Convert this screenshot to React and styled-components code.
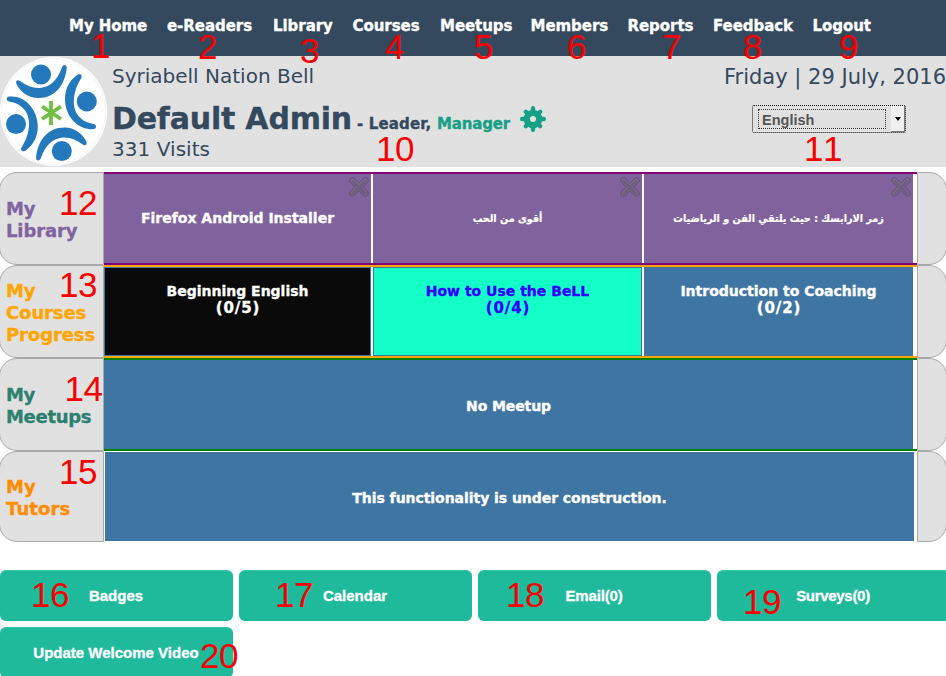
import React from "react";
import styled, { createGlobalStyle, css } from "styled-components";

const Global = createGlobalStyle`
  html, body { margin: 0; padding: 0; background: #fefefe; overflow: hidden; }
  * { box-sizing: border-box; }
`;

const sans = `Verdana, "DejaVu Sans", sans-serif`;
const arial = `"Liberation Sans", Arial, sans-serif`;

const heavy = css`
  font-weight: bold;
  -webkit-text-stroke: 0.35px currentColor;
`;

const Page = styled.div`
  position: relative;
  width: 946px;
  height: 676px;
  overflow: hidden;
  font-family: ${sans};
`;

const Nav = styled.nav`
  height: 56px;
  padding: 16px 0 0 69px;
  display: flex;
  background: #34495e;
`;

const NavLink = styled.a`
  flex: none;
  width: ${(p) => p.$w}px;
  ${heavy}
  font-size: 15px;
  line-height: 20px;
  letter-spacing: -0.05px;
  white-space: nowrap;
  color: #fff;
`;

const Header = styled.header`
  height: 111px;
  display: flex;
  background: #e1e1e1;
  color: #34495e;
`;

const Logo = styled.svg`
  flex: none;
  width: 112px;
  height: 111px;
`;

const Identity = styled.div`
  flex: 1;
  padding-top: 8px;
  white-space: nowrap;
`;

const Plain = styled.div`
  font-size: ${(p) => p.$size || 20}px;
  line-height: 24px;
  letter-spacing: ${(p) => p.$ls || 0}px;
`;

const NameRow = styled.div`
  display: flex;
  align-items: baseline;
  height: 49px;
  padding-top: 12px;
`;

const Name = styled.h1`
  margin: 0;
  width: 245px;
  ${heavy}
  font-size: 30px;
  line-height: 38px;
  letter-spacing: -0.2px;
`;

const Role = styled.span`
  width: ${(p) => p.$w}px;
  ${heavy}
  font-size: 15px;
  letter-spacing: ${(p) => p.$ls}px;
  color: ${(p) => (p.$accent ? "#16a085" : "#34495e")};
`;

const Gear = styled.svg`
  width: 26px;
  height: 26px;
  align-self: flex-start;
  margin-top: 6px;
`;

const Side = styled.div`
  width: 240px;
  padding-top: 9px;
  display: flex;
  flex-direction: column;
  align-items: flex-end;
  white-space: nowrap;
`;

const Select = styled.div`
  width: 154px;
  height: 28px;
  margin: 16px 40px 0 0;
  padding: 3px 0 2px 5px;
  display: flex;
  justify-content: space-between;
  border: 1px dotted #111;
  border-radius: 2px;
`;

const SelectValue = styled.div`
  width: 128px;
  height: 20px;
  padding-left: 3px;
  border: 1px dotted #333;
  font: bold 14.5px/20px ${arial};
  color: #555;
`;

const SelectArrow = styled.div`
  width: 14px;
  height: 26px;
  margin-top: -3px;
  display: flex;
  align-items: center;
  justify-content: center;
  background: #f0f0f0;
  border-right: 1px solid #777;
  border-bottom: 1px solid #777;
  &::after {
    content: "";
    border: 3.5px solid transparent;
    border-top: 4px solid #000;
    border-bottom: 0;
  }
`;

const Board = styled.main`
  padding-top: 5px;
  height: 375px;
`;

const Row = styled.section`
  display: flex;
  height: ${(p) => p.$h || 93}px;
`;

const RowLabel = styled.div`
  flex: none;
  width: 105px;
  margin-left: -1px;
  padding: 2px 0 0 6px;
  display: flex;
  flex-direction: column;
  justify-content: center;
  background: #e1e1e1;
  border: 1px solid #a9a9a9;
  border-radius: 18px 0 0 18px;
  ${heavy}
  font-size: 18px;
  line-height: 22px;
  letter-spacing: ${(p) => p.$ls ?? -0.1}px;
  color: ${(p) => p.$color};
`;

const Track = styled.div`
  flex: none;
  width: 813px;
  display: flex;
  gap: 2px;
  padding-right: 4px;
  border: solid ${(p) => p.$line};
  border-width: 2px 0;
  ${(p) =>
    p.$bare &&
    css`
      border: 0;
      padding: 1px 3px 1px 1px;
    `}
`;

const Card = styled.article`
  position: relative;
  flex: ${(p) => (p.$w ? `0 0 ${p.$w}px` : "1")};
  display: flex;
  flex-direction: column;
  align-items: center;
  justify-content: ${(p) => (p.$top ? "flex-start" : "center")};
  padding-top: ${(p) => p.$pt ?? 0}px;
  background: ${(p) => p.$bg};
  ${(p) => p.$edge && css`border: 1px solid #3f75a2;`}
  color: ${(p) => p.$fg || "#fff"};
  ${heavy}
  font-size: 14px;
  line-height: 17px;
  white-space: nowrap;
  letter-spacing: ${(p) => p.$ls || 0}px;
`;

const Count = styled.span`
  font-size: 15px;
  letter-spacing: 0.9px;
  margin-right: -0.9px;
`;

const Arabic = styled.span`
  font-family: "DejaVu Sans Condensed", "DejaVu Sans", sans-serif;
  font-stretch: condensed;
  font-size: ${(p) => p.$size}px;
  -webkit-text-stroke: 0.2px currentColor;
`;

const Close = styled.svg`
  position: absolute;
  right: 2px;
  top: 3px;
  width: 20px;
  height: 20px;
`;

const EndCap = styled.div`
  flex: none;
  width: 30px;
  background: #e1e1e1;
  border: 1px solid #a9a9a9;
  border-radius: 0 18px 18px 0;
`;

const Actions = styled.footer`
  width: 956px;
  padding-top: 28px;
  display: grid;
  grid-template-columns: repeat(4, 233px);
  gap: 6px;
`;

const Action = styled.button`
  height: 51px;
  padding: 0 1px 0 0;
  border: 0;
  border-top: 1px solid #35c6a9;
  border-radius: 6px;
  background: #1fba9c;
  color: #fff;
  font: bold 15px/20px ${arial};
  letter-spacing: ${(p) => p.$ls || 0}px;
  -webkit-text-stroke: 0.3px currentColor;
  white-space: nowrap;
`;

const Marker = styled.span`
  position: absolute;
  left: ${(p) => p.$x}px;
  top: ${(p) => p.$y}px;
  font: 35px/40px ${arial};
  font-kerning: none;
  letter-spacing: -0.5px;
  color: #f80000;
`;

const Person = () => (
  <>
    <circle cx="41" cy="18.500" r="10" />
    <path d="M61.500 12.500C62.500 8 67 8 66.700 12C65 29 55 42 38.500 42C27 42 19.500 34.500 16.300 27.500C15.500 24.500 17.500 23.500 20 25C27 30 33 32.500 40 32C50 31 57.500 24 61.500 12.500Z" />
    <circle cx="86.800" cy="45.500" r="10" />
    <path d="M76.500 19.500C79 17 83 18.500 81.300 22C75.500 31 72.300 42 74.500 52C76.500 61 84 66.500 94 68C97 69 96.500 72.500 94 73C79 75 65 61 65 43C65 32 70 24.500 76.500 19.500Z" />
  </>
);

const CloseIcon = () => (
  <Close viewBox="0 0 20 20">
    <path d="M3.500 3.500 16.500 16.500M16.500 3.500 3.500 16.500" stroke="#5a4870" strokeWidth="6" strokeLinecap="round" />
    <path d="M3.500 3.500 16.500 16.500M16.500 3.500 3.500 16.500" stroke="#7d6b8d" strokeWidth="4.600" strokeLinecap="round" />
    <path d="M4 4.500 16 16.500M16 4.500 4 16.500" stroke="#6f5d80" strokeWidth="3" strokeLinecap="round" />
  </Close>
);

const links = [
  ["My Home", 98], ["e-Readers", 106], ["Library", 79.5], ["Courses", 87.5], ["Meetups", 90.5],
  ["Members", 97], ["Reports", 85.5], ["Feedback", 99.5], ["Logout", 70],
];

const markers = [
  [1, 91, 26], [2, 198, 27], [3, 300, 31], [4, 385, 27], [5, 474, 27], [6, 567, 27], [7, 662, 27],
  [8, 743, 27], [9, 839, 27], [10, 376, 129], [11, 804, 129], [12, 59, 183], [13, 59, 265],
  [14, 64.5, 369], [15, 59, 452], [16, 31, 575], [17, 275, 575], [18, 506, 575], [19, 743, 582], [20, 200, 636],
];

export default function App() {
  return (
    <Page>
      <Global />
      <Nav>
        {links.map(([label, w]) => (
          <NavLink key={label} $w={w}>{label}</NavLink>
        ))}
      </Nav>
      <Header>
        <Logo viewBox="0 0 112 111">
          <ellipse cx="53.500" cy="55.500" rx="53.500" ry="54.500" fill="#fff" />
          <ellipse cx="53.500" cy="55.500" rx="52" ry="53" fill="none" stroke="#eee" strokeWidth=".7" />
          <g fill="#2379bc">
            <Person />
            <g transform="rotate(180 51.400 56.800)"><Person /></g>
          </g>
          <path d="M51 45V69M42 50.500 61 63M61 50.500 42 63" stroke="#70bf44" strokeWidth="3.800" />
        </Logo>
        <Identity>
          <Plain>Syriabell Nation Bell</Plain>
          <NameRow>
            <Name>Default Admin</Name>
            <Role $w={80} $ls={0.15}>- Leader,</Role>
            <Role $w={83} $ls={-0.15} $accent>Manager</Role>
            <Gear viewBox="0 0 26 26">
              <path
                d="M13 2.200V23.800M2.200 13H23.800M5.800 5.800 20.200 20.200M20.200 5.800 5.800 20.200"
                stroke="#16a085"
                strokeWidth="4.400"
                strokeLinecap="round"
              />
              <circle cx="13" cy="13" r="9.300" fill="#16a085" />
              <circle cx="13" cy="13" r="3" fill="#e1e1e1" />
            </Gear>
          </NameRow>
          <Plain $ls={0.05}>331 Visits</Plain>
        </Identity>
        <Side>
          <Plain $size={21}>Friday | 29 July, 2016</Plain>
          <Select>
            <SelectValue>English</SelectValue>
            <SelectArrow />
          </Select>
        </Side>
      </Header>
      <Board>
        <Row>
          <RowLabel $color="#8064a0"><span>My</span><span>Library</span></RowLabel>
          <Track $line="#800080">
            <Card $w={267} $bg="#80639d">Firefox Android Installer<CloseIcon /></Card>
            <Card $w={269} $bg="#80639d"><Arabic dir="rtl" $size={10.7}>أقوى من الحب</Arabic><CloseIcon /></Card>
            <Card $w={269} $bg="#80639d"><Arabic dir="rtl" $size={10.7}>زمر الارابسك : حيث يلتقي الفن و الرياضيات</Arabic><CloseIcon /></Card>
          </Track>
          <EndCap />
        </Row>
        <Row>
          <RowLabel $color="#ffa500"><span>My</span><span>Courses</span><span>Progress</span></RowLabel>
          <Track $line="#ffa500">
            <Card $w={267} $top $edge $pt={15} $bg="#0a0a0a"><span>Beginning English</span><Count>(0/5)</Count></Card>
            <Card $w={269} $top $edge $pt={15} $bg="#14ffc8" $fg="#3300ff"><span>How to Use the BeLL</span><Count>(0/4)</Count></Card>
            <Card $w={269} $top $pt={16} $bg="#3f75a2"><span>Introduction to Coaching</span><Count>(0/2)</Count></Card>
          </Track>
          <EndCap />
        </Row>
        <Row>
          <RowLabel $color="#2c8070" $ls={-0.3}><span>My</span><span>Meetups</span></RowLabel>
          <Track $line="#008000"><Card $bg="#3f75a2" $pt={3} $ls={-0.1}>No Meetup</Card></Track>
          <EndCap />
        </Row>
        <Row $h={91}>
          <RowLabel $color="#ff8c00" $ls={0.1}><span>My</span><span>Tutors</span></RowLabel>
          <Track $bare><Card $bg="#3f75a2" $pt={3} $ls={-0.05}>This functionality is under construction.</Card></Track>
          <EndCap />
        </Row>
      </Board>
      <Actions>
        <Action>Badges</Action>
        <Action>Calendar</Action>
        <Action $ls={-0.15}>Email(0)</Action>
        <Action $ls={-0.3}>Surveys(0)</Action>
        <Action>Update Welcome Video</Action>
      </Actions>
      {markers.map(([n, x, y]) => (
        <Marker key={n} $x={x} $y={y}>{n}</Marker>
      ))}
    </Page>
  );
}
